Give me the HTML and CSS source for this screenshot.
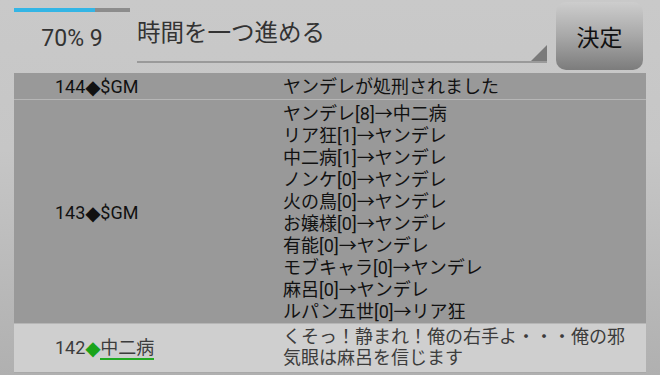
FILE: index.html
```html
<!DOCTYPE html>
<html lang="ja">
<head>
    <meta charset="UTF-8">
    <meta name="viewport" content="width=device-width, initial-scale=1.0">
    <title>ログ</title>
    <link rel="stylesheet" href="styles.css">
</head>
<body>
    <div class="top">
        <div class="status">
            <div class="progress"><div class="progress-fill" style="width: 70%"></div></div>
            <div class="count">70% 9</div>
        </div>
        <div class="field">
            <span class="field-text">時間を一つ進める</span>
            <span class="corner"></span>
        </div>
        <button class="submit">決定</button>
    </div>

    <div class="log">
        <div class="row">
            <div class="who">144<span class="mark">◆</span>$GM</div>
            <div class="msg">ヤンデレが処刑されました</div>
        </div>
        <div class="row votes">
            <div class="who">143<span class="mark">◆</span>$GM</div>
            <div class="msg">
                ヤンデレ[8]→中二病<br>
                リア狂[1]→ヤンデレ<br>
                中二病[1]→ヤンデレ<br>
                ノンケ[0]→ヤンデレ<br>
                火の鳥[0]→ヤンデレ<br>
                お嬢様[0]→ヤンデレ<br>
                有能[0]→ヤンデレ<br>
                モブキャラ[0]→ヤンデレ<br>
                麻呂[0]→ヤンデレ<br>
                ルパン五世[0]→リア狂
            </div>
        </div>
        <div class="row player">
            <div class="who">142<span class="mark green">◆</span><span class="name">中二病</span></div>
            <div class="msg">くそっ！静まれ！俺の右手よ・・・俺の邪気眼は麻呂を信じます</div>
        </div>
    </div>
</body>
</html>
```

FILE: styles.css
```css
* {
    box-sizing: border-box;
    margin: 0;
    padding: 0;
}

body {
    width: 660px;
    height: 375px;
    overflow: hidden;
    font-family: Roboto, "Noto Sans CJK JP", sans-serif;
    background: linear-gradient(#c9c9c9, #c6c6c6 40%, #b0b0b0);
    color: #111;
}

.top {
    display: flex;
    height: 73px;
    padding-right: 17px;
}

.status {
    width: 116px;
    margin-left: 14px;
    padding-top: 8px;
    text-align: center;
}

.progress {
    height: 4px;
    background-color: #8c8c8c;
}

.progress-fill {
    height: 100%;
    background-color: #33b5e5;
}

.count {
    margin-top: 12px;
    font-size: 23px;
    line-height: 30px;
    color: #333;
}

.field {
    position: relative;
    flex: 1;
    margin-left: 7px;
    height: 63px;
    padding-top: 18px;
    border-bottom: 2px solid #9a9a9a;
}

.field-text {
    font-size: 23.5px;
    line-height: 30px;
    color: #333;
}

.corner {
    position: absolute;
    right: 0;
    bottom: 0;
    width: 0;
    height: 0;
    border-left: 16px solid transparent;
    border-bottom: 16px solid #7a7a7a;
}

.submit {
    width: 87px;
    height: 68px;
    margin: 2px 0 0 9px;
    border: none;
    border-radius: 10px;
    background: linear-gradient(#cdcdcd, #a8a8a8 50%, #7c7c7c);
    font-family: Roboto, "Noto Sans CJK JP", sans-serif;
    font-size: 23px;
    color: #111;
}

.log {
    margin: 0 14px;
}

.row {
    display: grid;
    grid-template-columns: 269px 1fr;
    align-items: center;
    padding: 3px 0 1px;
    font-size: 18px;
    line-height: 22px;
    background-color: #999;
    border-bottom: 1px solid #b6b6b6;
}

.row.votes {
    padding: 3px 0 0;
}

.row.player {
    padding: 2px 0 4px;
    line-height: 21px;
    background-color: #cfcfcf;
    color: #3c3c3c;
    border-bottom-color: #a9a9a9;
}

.who {
    padding-left: 41px;
}

.msg {
    padding-right: 4px;
}

.mark {
    display: inline-block;
    width: 15px;
    font-family: "DejaVu Sans", sans-serif;
    font-size: 20px;
    line-height: 20px;
    text-align: center;
    vertical-align: -1px;
    color: #111;
}

.mark.green {
    color: #1aa31a;
}

.name {
    border-bottom: 2px solid #22aa22;
}
```
